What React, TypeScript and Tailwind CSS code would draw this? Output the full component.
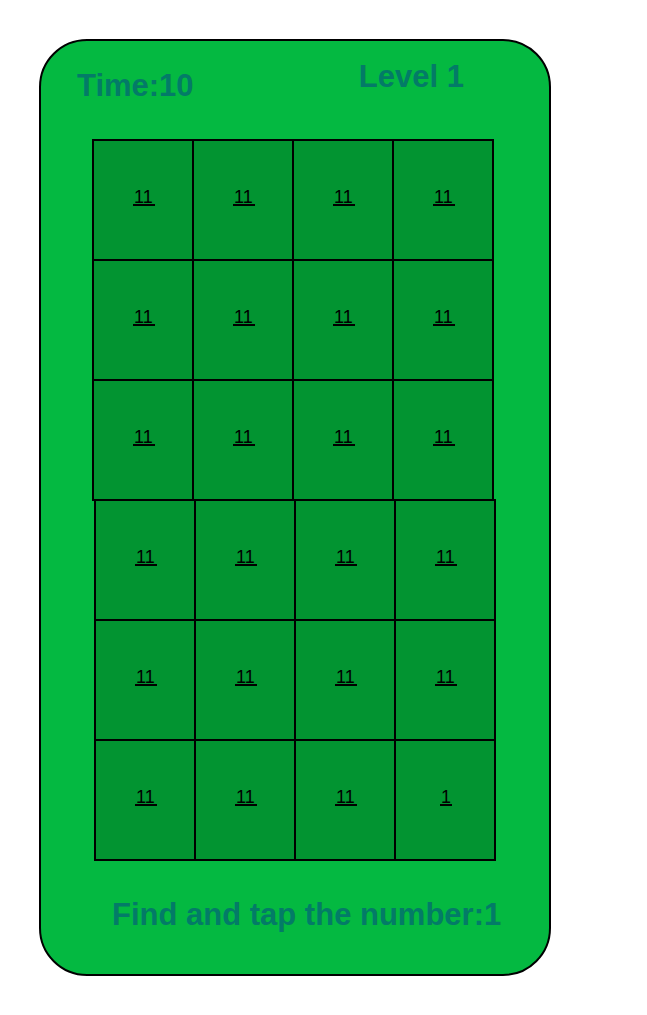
import React, { useState } from "react";

const upperTiles: number[] = Array(12).fill(11);
const lowerTiles: number[] = [...Array(11).fill(11), 1];

type BoardProps = {
  tiles: number[];
  className: string;
  onPick: (value: number) => void;
};

function Board({ tiles, className, onPick }: BoardProps) {
  return (
    <div className={`grid grid-cols-4 gap-[2px] bg-black p-[2px] ${className}`}>
      {tiles.map((value, index) => (
        <button
          key={index}
          type="button"
          onClick={() => onPick(value)}
          className="flex h-[118px] items-start justify-center bg-[#029431] pt-[49px] pl-[2px] text-lg leading-[14px] text-black"
        >
          <span
            className={`border-b-2 border-black pl-px text-left ${
              value > 9 ? "w-[22px]" : "w-3"
            }`}
          >
            {value}
          </span>
        </button>
      ))}
    </div>
  );
}

export default function App() {
  const [level, setLevel] = useState(1);
  const target = 1;
  const pick = (value: number) => {
    if (value === target) setLevel(level + 1);
  };

  return (
    <div className="min-h-screen bg-white p-[39px] font-['Liberation_Sans',Arial,sans-serif]">
      <main className="w-full max-w-[512px] rounded-[48px] border-2 border-black bg-[#04b941] pb-[41px]">
        <header className="flex items-start justify-between pt-[18px] pr-[85px] pl-9 text-[31px] leading-9 font-bold text-[#037b67]">
          <p className="pt-[9px]">Time:10</p>
          <h1>Level {level}</h1>
        </header>
        <div className="pt-[35px]">
          <Board tiles={upperTiles} className="mr-[55px] ml-[51px]" onPick={pick} />
          <Board tiles={lowerTiles} className="mx-[53px] -mt-[2px]" onPick={pick} />
        </div>
        <p className="pt-9 pl-[71px] text-[31px] leading-9 font-bold text-[#037b67]">
          Find and tap the number:{target}
        </p>
      </main>
    </div>
  );
}
